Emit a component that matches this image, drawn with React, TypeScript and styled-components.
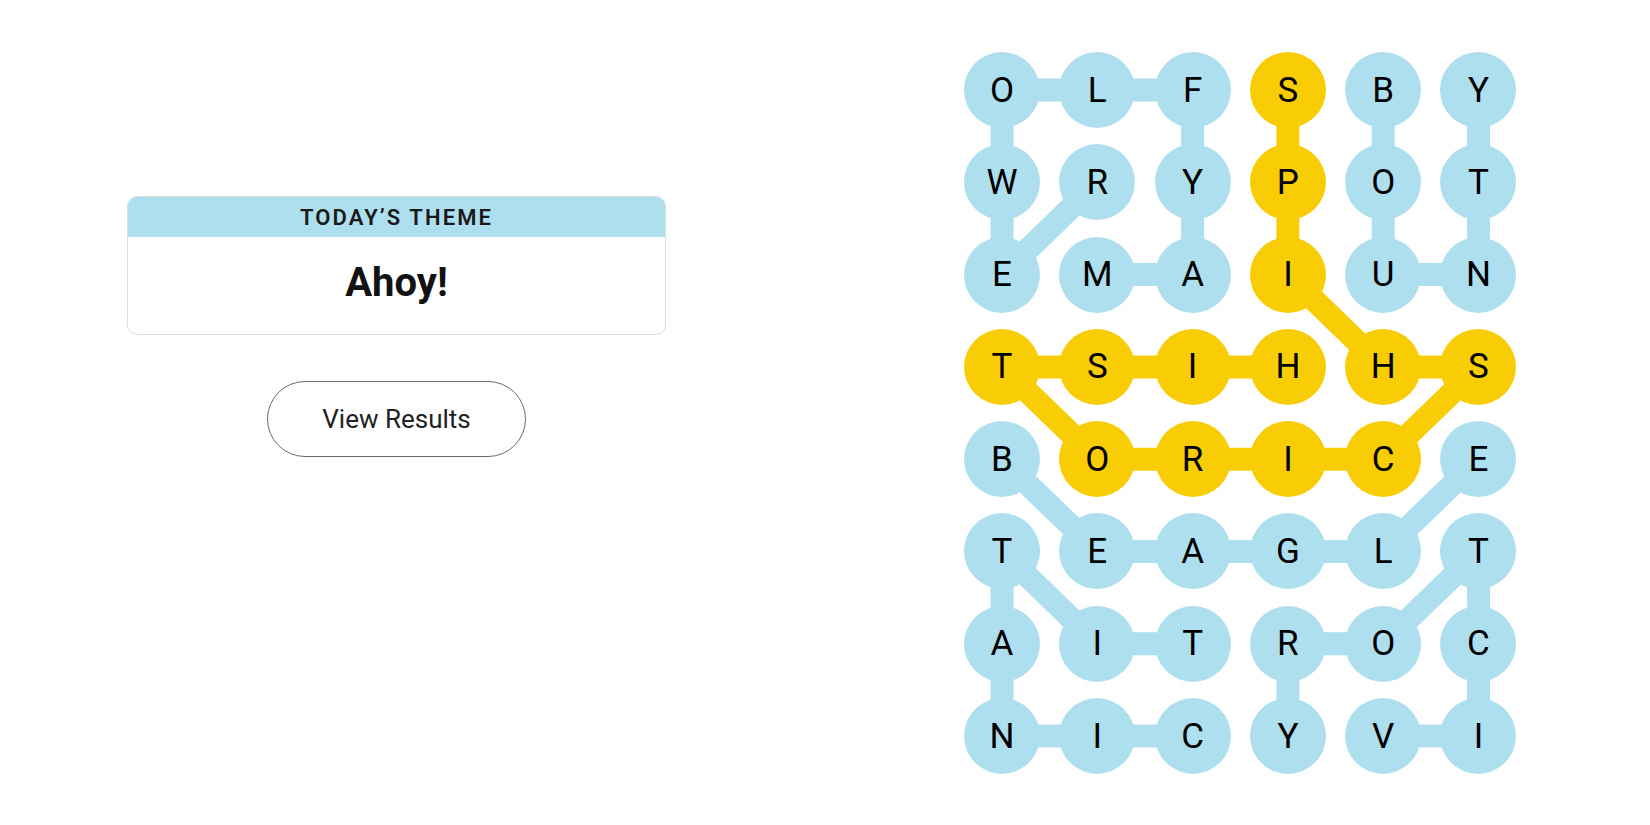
import * as React from "react";
import styled, { createGlobalStyle } from "styled-components";

const BLUE = "#aedfee";
const YELLOW = "#f8cd05";

const CELL = 76;
const COL_STEP = 95.3;
const ROW_STEP = 92.3;

const GlobalStyle = createGlobalStyle`
  html, body {
    margin: 0;
    padding: 0;
    background: #ffffff;
  }
  body {
    font-family: Roboto, "Liberation Sans", sans-serif;
    color: #121212;
  }
`;

const Page = styled.div`
  display: flex;
  width: 1650px;
  height: 825px;
  overflow: hidden;
`;

const SidePanel = styled.div`
  width: 793px;
  display: flex;
  flex-direction: column;
  align-items: center;
  padding-top: 196px;
  box-sizing: border-box;
`;

const ThemeCard = styled.div`
  width: 539px;
  height: 139px;
  border: 1px solid #dedede;
  border-radius: 10px;
  overflow: hidden;
  box-sizing: border-box;
  display: flex;
  flex-direction: column;
`;

const ThemeHeader = styled.div`
  height: 40px;
  background: ${BLUE};
  display: flex;
  align-items: center;
  justify-content: center;
  font-size: 22px;
  font-weight: 600;
  letter-spacing: 2.1px;
  color: #1a1a1a;
`;

const ThemeBody = styled.div`
  flex: 1;
  display: flex;
  align-items: center;
  justify-content: center;
  font-size: 40px;
  font-weight: 700;
  color: #121212;
  padding-bottom: 6px;
`;

const ResultsButton = styled.button`
  margin-top: 46px;
  width: 259px;
  height: 76px;
  border: 1.5px solid #6b6b6b;
  border-radius: 38px;
  background: #ffffff;
  font-family: Roboto, "Liberation Sans", sans-serif;
  font-size: 26px;
  color: #222222;
  cursor: pointer;
`;

const BoardArea = styled.div`
  margin-left: 171px;
  margin-top: 52px;
`;

const Board = styled.div`
  position: relative;
  width: ${5 * COL_STEP + CELL}px;
  height: ${7 * ROW_STEP + CELL}px;
`;

const Links = styled.svg`
  position: absolute;
  inset: 0;
  z-index: 0;
`;

const Grid = styled.div`
  position: relative;
  z-index: 1;
  display: grid;
  grid-template-columns: repeat(6, ${CELL}px);
  grid-auto-rows: ${CELL}px;
  column-gap: ${COL_STEP - CELL}px;
  row-gap: ${ROW_STEP - CELL}px;
`;

const Letter = styled.div<{ $found: boolean }>`
  width: ${CELL}px;
  height: ${CELL}px;
  border-radius: 50%;
  background: ${(p) => (p.$found ? YELLOW : BLUE)};
  display: flex;
  align-items: center;
  justify-content: center;
  font-size: 35px;
  font-weight: 400;
  color: #000000;
`;

const rows = [
  "OLFSBY",
  "WRYPOT",
  "EMAIUN",
  "TSIHHS",
  "BORICE",
  "TEAGLT",
  "AITROC",
  "NICYVI",
];

type P = [number, number];

const yellowLinks: [P, P][] = [
  [[0, 3], [1, 3]],
  [[1, 3], [2, 3]],
  [[2, 3], [3, 4]],
  [[3, 4], [3, 5]],
  [[3, 5], [4, 4]],
  [[4, 4], [4, 3]],
  [[4, 3], [4, 2]],
  [[4, 2], [4, 1]],
  [[4, 1], [3, 0]],
  [[3, 0], [3, 1]],
  [[3, 1], [3, 2]],
  [[3, 2], [3, 3]],
];

const blueLinks: [P, P][] = [
  // mayflower
  [[2, 1], [2, 2]],
  [[2, 2], [1, 2]],
  [[1, 2], [0, 2]],
  [[0, 2], [0, 1]],
  [[0, 1], [0, 0]],
  [[0, 0], [1, 0]],
  [[1, 0], [2, 0]],
  [[2, 0], [1, 1]],
  // bounty
  [[0, 4], [1, 4]],
  [[1, 4], [2, 4]],
  [[2, 4], [2, 5]],
  [[2, 5], [1, 5]],
  [[1, 5], [0, 5]],
  // beagle
  [[4, 0], [5, 1]],
  [[5, 1], [5, 2]],
  [[5, 2], [5, 3]],
  [[5, 3], [5, 4]],
  [[5, 4], [4, 5]],
  // titanic
  [[6, 2], [6, 1]],
  [[6, 1], [5, 0]],
  [[5, 0], [6, 0]],
  [[6, 0], [7, 0]],
  [[7, 0], [7, 1]],
  [[7, 1], [7, 2]],
  // victory
  [[7, 4], [7, 5]],
  [[7, 5], [6, 5]],
  [[6, 5], [5, 5]],
  [[5, 5], [6, 4]],
  [[6, 4], [6, 3]],
  [[6, 3], [7, 3]],
];

const found = new Set<string>();
yellowLinks.forEach(([a, b]) => {
  found.add(a.join(","));
  found.add(b.join(","));
});

const cx = (c: number) => CELL / 2 + c * COL_STEP;
const cy = (r: number) => CELL / 2 + r * ROW_STEP;

const Link = (props: { from: P; to: P; color: string }) => (
  <line
    x1={cx(props.from[1])}
    y1={cy(props.from[0])}
    x2={cx(props.to[1])}
    y2={cy(props.to[0])}
    stroke={props.color}
    strokeWidth={23}
  />
);

export default function App() {
  return (
    <Page>
      <GlobalStyle />
      <SidePanel>
        <ThemeCard>
          <ThemeHeader>TODAY’S THEME</ThemeHeader>
          <ThemeBody>Ahoy!</ThemeBody>
        </ThemeCard>
        <ResultsButton>View Results</ResultsButton>
      </SidePanel>
      <BoardArea>
        <Board>
          <Links width={5 * COL_STEP + CELL} height={7 * ROW_STEP + CELL}>
            {blueLinks.map(([a, b], i) => (
              <Link key={"b" + i} from={a} to={b} color={BLUE} />
            ))}
            {yellowLinks.map(([a, b], i) => (
              <Link key={"y" + i} from={a} to={b} color={YELLOW} />
            ))}
          </Links>
          <Grid>
            {rows.map((row, r) =>
              row.split("").map((ch, c) => (
                <Letter key={r + "-" + c} $found={found.has(r + "," + c)}>
                  {ch}
                </Letter>
              ))
            )}
          </Grid>
        </Board>
      </BoardArea>
    </Page>
  );
}
